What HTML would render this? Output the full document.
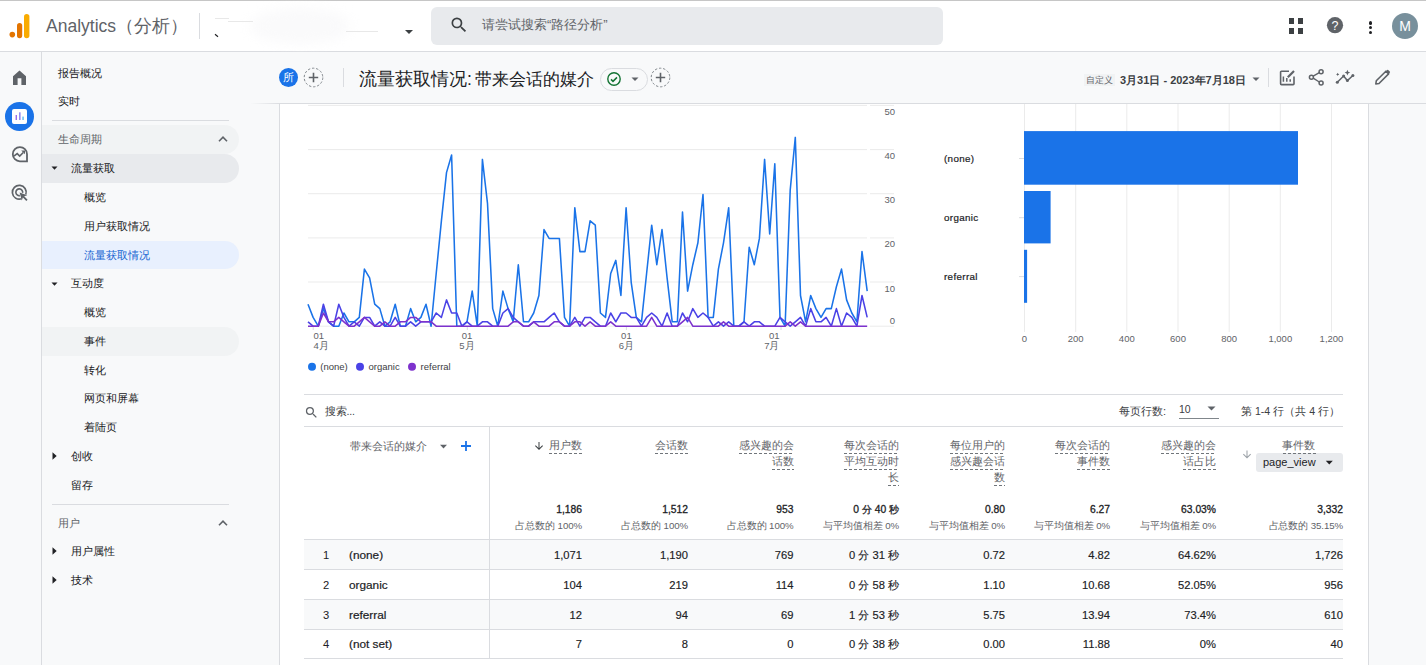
<!DOCTYPE html>
<html><head><meta charset="utf-8">
<style>
*{box-sizing:border-box}
html,body{margin:0;padding:0}
body{width:1426px;height:665px;overflow:hidden;position:relative;background:#fff;font-family:"Liberation Sans",sans-serif;color:#202124}
.a{position:absolute;white-space:nowrap}
.hdr{left:0;top:0;width:1426px;height:52px;background:#fff;border-top:1px solid #c6c6c6;border-bottom:1px solid #dadce0}
.rail{left:0;top:52px;width:42px;height:613px;background:#f8f9fa;border-right:1px solid #dadce0}
.nav{left:42px;top:52px;width:238px;height:613px;background:#f8f9fa}
.navb{left:279px;top:104px;width:1px;height:561px;background:#dadce0}
.sub{left:280px;top:52px;width:1146px;height:52px;background:#f8f9fa;border-bottom:1px solid #dadce0}
.card{left:280px;top:104px;width:1089px;height:561px;background:#fff;border-right:1px solid #dadce0}
.rstrip{left:1369px;top:104px;width:57px;height:561px;background:#f8f9fa}
.ni{font-size:11.2px;color:#202124;line-height:14px}
</style></head><body>
<!-- header -->
<div class="a hdr"></div>
<svg class="a" style="left:0;top:0" width="40" height="50">
  <circle cx="12.3" cy="34.6" r="2.8" fill="#e37400"/>
  <rect x="17" y="23" width="5.2" height="15.2" rx="2.6" fill="#e37400"/>
  <rect x="24" y="14" width="5.4" height="24.2" rx="2.7" fill="#f9ab00"/>
</svg>
<div class="a" style="left:46px;top:15px;font-size:17.5px;color:#5f6368;line-height:22px">Analytics（分析）</div>
<div class="a" style="left:199px;top:13px;width:1px;height:26px;background:#dadce0"></div>
<div class="a" style="left:250px;top:8px;width:100px;height:36px;border-radius:50%;background:#fafafb;filter:blur(6px)"></div>
<div class="a" style="left:215px;top:18px;width:14px;height:1px;background:#e8e8e8"></div>
<div class="a" style="left:228px;top:21px;width:25px;height:1px;background:#e8e8e8"></div>
<div class="a" style="left:346px;top:31px;width:32px;height:1px;background:#e8e8e8"></div>
<svg class="a" style="left:214px;top:33px" width="8" height="6"><path d="M1 1.2l3 2.5" stroke="#202124" stroke-width="1.2"/></svg>
<svg class="a" style="left:403px;top:28px" width="12" height="8"><path d="M2 2h8l-4 4z" fill="#3c4043"/></svg>
<div class="a" style="left:431px;top:7px;width:512px;height:37.5px;background:#e8eaed;border-radius:6px"></div>
<svg class="a" style="left:449px;top:15px" width="20" height="20" viewBox="0 0 24 24"><path fill="#3c4043" d="M15.5 14h-.79l-.28-.27A6.47 6.47 0 0 0 16 9.5 6.5 6.5 0 1 0 9.5 16c1.61 0 3.09-.59 4.23-1.57l.27.28v.79l5 4.99L20.49 19l-4.99-5zm-6 0C7.01 14 5 11.99 5 9.5S7.01 5 9.5 5 14 7.01 14 9.5 11.99 14 9.5 14z"/></svg>
<div class="a" style="left:482px;top:17px;font-size:13px;color:#5f6368;line-height:16px">请尝试搜索“路径分析”</div>
<!-- apps grid -->
<div class="a" style="left:1289px;top:18px;width:5px;height:5.5px;background:#3c4043"></div>
<div class="a" style="left:1298px;top:18px;width:5px;height:5.5px;background:#3c4043"></div>
<div class="a" style="left:1289px;top:28px;width:5px;height:5.5px;background:#3c4043"></div>
<div class="a" style="left:1298px;top:28px;width:5px;height:5.5px;background:#3c4043"></div>
<svg class="a" style="left:1325px;top:15px" width="20" height="20" viewBox="0 0 20 20"><circle cx="10" cy="10.2" r="8.1" fill="#5f6368"/><text x="10" y="14.6" font-size="12.5" text-anchor="middle" fill="#fff" font-family="Liberation Sans">?</text></svg>
<div class="a" style="left:1368.5px;top:21px;width:3.5px;height:3.5px;border-radius:50%;background:#202124"></div>
<div class="a" style="left:1368.5px;top:25.5px;width:3.5px;height:3.5px;border-radius:50%;background:#202124"></div>
<div class="a" style="left:1368.5px;top:30.5px;width:3.5px;height:3.5px;border-radius:50%;background:#202124"></div>
<div class="a" style="left:1392px;top:13px;width:26px;height:26px;border-radius:50%;background:#78909c;color:#fff;font-size:14px;line-height:27px;text-align:center">M</div>

<!-- rail -->
<div class="a rail"></div>
<svg class="a" style="left:0;top:60px" width="40" height="30" viewBox="0 60 40 30"><path d="M19.5 70.4L13 76.2V85H17.6V78.3H21.4V85H26V76.2Z" fill="#5f6368"/></svg>
<div class="a" style="left:5px;top:101.5px;width:29px;height:29px;border-radius:50%;background:#1a73e8"></div>
<div class="a" style="left:12.2px;top:109px;width:15px;height:15px;border-radius:2px;background:#fff"></div>
<svg class="a" style="left:0;top:100px" width="40" height="30" viewBox="0 100 40 30"><rect x="15.6" y="115" width="1.3" height="5" fill="#8f5fe8"/><rect x="19.2" y="112.3" width="1.3" height="7.7" fill="#7b6ff0"/><rect x="22.4" y="116.6" width="1.3" height="3.4" fill="#4fb3f0"/></svg>
<svg class="a" style="left:10px;top:145px" width="20" height="20" viewBox="0 0 20 20"><path d="M9.9 16.3A7.1 7.1 0 1 1 17 9.2V16.3Z" fill="none" stroke="#5f6368" stroke-width="1.8" stroke-linejoin="miter"/><path d="M3.9 11.1l3.3-2.5 2.5 2.5 3.6-3.6" fill="none" stroke="#5f6368" stroke-width="1.6"/><path d="M11.2 5.4h3.8v3.8z" fill="#5f6368"/></svg>
<svg class="a" style="left:10px;top:183px" width="20" height="20" viewBox="0 0 20 20"><path d="M15.8 11.5A6.9 6.9 0 1 0 11.5 15.8" fill="none" stroke="#5f6368" stroke-width="1.7"/><path d="M12.6 9.9A3.4 3.4 0 1 0 9.9 12.6" fill="none" stroke="#5f6368" stroke-width="1.6"/><path d="M9.6 9.6l7.6 2.6-3 1.1 3.4 3.4-1.3 1.3-3.4-3.4-1.1 3z" fill="#5f6368"/></svg>

<!-- nav -->
<div class="a nav"></div>
<div class="a" style="left:42px;top:125px;width:197px;height:29px;background:#f1f3f4;border-radius:0 14.5px 14.5px 0"></div>
<div class="a" style="left:42px;top:154px;width:197px;height:29px;background:#e8eaed;border-radius:0 14.5px 14.5px 0"></div>
<div class="a" style="left:42px;top:240.5px;width:197px;height:28.5px;background:#e8f0fe;border-radius:0 14.25px 14.25px 0"></div>
<div class="a" style="left:42px;top:327px;width:197px;height:29px;background:#f1f3f4;border-radius:0 14.5px 14.5px 0"></div>
<div class="a" style="left:58px;top:64.8px;font-size:11.2px;line-height:16px;color:#202124;">报告概况</div>
<div class="a" style="left:58px;top:93.0px;font-size:11.2px;line-height:16px;color:#202124;">实时</div>
<div class="a" style="left:52px;top:120px;width:177px;height:1px;background:#dadce0"></div>
<div class="a" style="left:58px;top:130.8px;font-size:11.2px;line-height:16px;color:#5f6368;">生命周期</div>
<svg class="a" style="left:218px;top:135px" width="10" height="8"><path d="M1 6.2L5 2.2 9 6.2" fill="none" stroke="#5f6368" stroke-width="1.6"/></svg>
<svg class="a" style="left:51px;top:165.3px" width="7" height="6"><path d="M0.5 1.5h6l-3 3.2z" fill="#202124"/></svg>
<div class="a" style="left:71px;top:160.2px;font-size:11.2px;line-height:16px;color:#202124;">流量获取</div>
<div class="a" style="left:84px;top:189.1px;font-size:11.2px;line-height:16px;color:#202124;">概览</div>
<div class="a" style="left:84px;top:217.9px;font-size:11.2px;line-height:16px;color:#202124;">用户获取情况</div>
<div class="a" style="left:84px;top:246.8px;font-size:11.2px;line-height:16px;color:#1967d2;">流量获取情况</div>
<svg class="a" style="left:51px;top:280.5px" width="7" height="6"><path d="M0.5 1.5h6l-3 3.2z" fill="#202124"/></svg>
<div class="a" style="left:71px;top:275.4px;font-size:11.2px;line-height:16px;color:#202124;">互动度</div>
<div class="a" style="left:84px;top:303.8px;font-size:11.2px;line-height:16px;color:#202124;">概览</div>
<div class="a" style="left:84px;top:333.1px;font-size:11.2px;line-height:16px;color:#202124;">事件</div>
<div class="a" style="left:84px;top:362.1px;font-size:11.2px;line-height:16px;color:#202124;">转化</div>
<div class="a" style="left:84px;top:390.2px;font-size:11.2px;line-height:16px;color:#202124;">网页和屏幕</div>
<div class="a" style="left:84px;top:419.1px;font-size:11.2px;line-height:16px;color:#202124;">着陆页</div>
<svg class="a" style="left:52px;top:452px" width="6" height="8"><path d="M0.5 0.3v7.4l4.2-3.7z" fill="#202124"/></svg>
<div class="a" style="left:71px;top:447.8px;font-size:11.2px;line-height:16px;color:#202124;">创收</div>
<div class="a" style="left:71px;top:476.8px;font-size:11.2px;line-height:16px;color:#202124;">留存</div>
<div class="a" style="left:52px;top:504px;width:177px;height:1px;background:#dadce0"></div>
<div class="a" style="left:58px;top:514.8px;font-size:11.2px;line-height:16px;color:#5f6368;">用户</div>
<svg class="a" style="left:218px;top:519px" width="10" height="8"><path d="M1 6.2L5 2.2 9 6.2" fill="none" stroke="#5f6368" stroke-width="1.6"/></svg>
<svg class="a" style="left:52px;top:547px" width="6" height="8"><path d="M0.5 0.3v7.4l4.2-3.7z" fill="#202124"/></svg>
<div class="a" style="left:71px;top:542.8px;font-size:11.2px;line-height:16px;color:#202124;">用户属性</div>
<svg class="a" style="left:52px;top:576px" width="6" height="8"><path d="M0.5 0.3v7.4l4.2-3.7z" fill="#202124"/></svg>
<div class="a" style="left:71px;top:571.8px;font-size:11.2px;line-height:16px;color:#202124;">技术</div>

<!-- subheader -->
<div class="a sub"></div>
<div class="a" style="left:279px;top:68px;width:19px;height:19px;border-radius:50%;background:#1a73e8;color:#fff;font-size:11px;line-height:19px;text-align:center">所</div>
<svg class="a" style="left:302.9px;top:66.8px" width="21" height="21"><circle cx="10.5" cy="10.5" r="9.3" fill="none" stroke="#80868b" stroke-width="1" stroke-dasharray="2.4 1.8"/><path d="M10.5 5.8v9.4M5.8 10.5h9.4" stroke="#5f6368" stroke-width="1.6"/></svg>
<div class="a" style="left:343px;top:68px;width:1px;height:19px;background:#dadce0"></div>
<div class="a" style="left:359px;top:66.5px;font-size:17.5px;line-height:24px;color:#202124">流量获取情况:</div>
<div class="a" style="left:475px;top:66.5px;font-size:17.3px;line-height:24px;color:#202124">带来会话的媒介</div>
<div class="a" style="left:600px;top:67.8px;width:48px;height:23px;border:1px solid #dadce0;border-radius:11.5px"></div>
<svg class="a" style="left:606px;top:70.5px" width="16" height="16" viewBox="0 0 16 16"><circle cx="8" cy="8" r="6.2" fill="none" stroke="#137333" stroke-width="1.4"/><path d="M5 8.4l2 2 4-4" fill="none" stroke="#137333" stroke-width="1.5"/></svg>
<svg class="a" style="left:630.5px;top:77px" width="8" height="5"><path d="M0.5 0.5h7l-3.5 3.6z" fill="#5f6368"/></svg>
<svg class="a" style="left:650.0px;top:66.5px" width="21" height="21"><circle cx="10.5" cy="10.5" r="9.3" fill="none" stroke="#80868b" stroke-width="1" stroke-dasharray="2.4 1.8"/><path d="M10.5 5.8v9.4M5.8 10.5h9.4" stroke="#5f6368" stroke-width="1.6"/></svg>
<div class="a" style="left:1084px;top:74px;width:31px;height:12px;background:#f1f3f4;font-size:8.5px;line-height:12px;color:#5f6368;text-align:center">自定义</div>
<div class="a" style="left:1120px;top:72px;font-size:11px;line-height:16px;color:#3c4043;font-weight:bold">3月31日 - 2023年7月18日</div>
<svg class="a" style="left:1252px;top:77px" width="8" height="5"><path d="M0.5 0.5h7l-3.5 3.6z" fill="#5f6368"/></svg>
<div class="a" style="left:1268px;top:68px;width:1px;height:19px;background:#dadce0"></div>
<svg class="a" style="left:1270px;top:60px" width="130" height="35" viewBox="1270 60 130 35"><path d="M1289 71.2H1281.5a0.9 0.9 0 0 0-.9.9v11.6a.9.9 0 0 0 .9.9h11.6a.9.9 0 0 0 .9-.9V76.5" fill="none" stroke="#5f6368" stroke-width="1.6"/><path d="M1283.4 76.4v5.4M1286.8 78v3.8M1290.2 79.3v2.5" stroke="#5f6368" stroke-width="1.5"/><path d="M1287.8 77.2l6.2-6.2" stroke="#5f6368" stroke-width="2.2"/><circle cx="1321.1" cy="71.7" r="2" fill="none" stroke="#5f6368" stroke-width="1.5"/><circle cx="1311.4" cy="77.2" r="2" fill="none" stroke="#5f6368" stroke-width="1.5"/><circle cx="1321.1" cy="83.1" r="2" fill="none" stroke="#5f6368" stroke-width="1.5"/><path d="M1313.2 76.2l6.1-3.5M1313.2 78.2l6.1 3.8" stroke="#5f6368" stroke-width="1.4"/><path d="M1337.3 82.3l6.3-6.3 3.8 4.6 5.5-5.1" fill="none" stroke="#5f6368" stroke-width="1.5"/><circle cx="1337.3" cy="82.3" r="1.5" fill="#5f6368"/><circle cx="1343.6" cy="76" r="1.5" fill="#5f6368"/><circle cx="1347.4" cy="80.6" r="1.5" fill="#5f6368"/><circle cx="1352.9" cy="75.5" r="1.5" fill="#5f6368"/><path d="M1347.4 69.8l.8 2 2 .8-2 .8-.8 2-.8-2-2-.8 2-.8z" fill="#5f6368"/><path d="M1337.7 72.8l.55 1.05 1.05 .55-1.05 .55-.55 1.05-.55-1.05-1.05-.55 1.05-.55z" fill="#5f6368"/><path d="M1375.8 84l.5-3.2 9.6-9.6 2.7 2.7-9.6 9.6z" fill="none" stroke="#5f6368" stroke-width="1.6" stroke-linejoin="round"/><path d="M1385.9 71.2l1.2-1.2a.8 .8 0 0 1 1.1 0l1.6 1.6a.8 .8 0 0 1 0 1.1l-1.2 1.2z" fill="#5f6368"/></svg>

<!-- content -->
<div class="a navb"></div>
<div class="a" style="left:250px;top:103px;width:30px;height:1px;background:linear-gradient(90deg,rgba(218,220,224,0),#dadce0)"></div>
<div class="a card"></div>
<div class="a rstrip"></div>
<svg class="a" style="left:0;top:0" width="1426" height="665"><line x1="308" y1="105.4" x2="867" y2="105.4" stroke="#ebebeb" stroke-width="1"/><line x1="870" y1="105.4" x2="894" y2="105.4" stroke="#ebebeb" stroke-width="1"/><text x="895" y="114.9" font-size="9.5" fill="#5f6368" text-anchor="end" font-family="Liberation Sans">50</text><line x1="308" y1="149.6" x2="867" y2="149.6" stroke="#ebebeb" stroke-width="1"/><line x1="870" y1="149.6" x2="894" y2="149.6" stroke="#ebebeb" stroke-width="1"/><text x="895" y="159.1" font-size="9.5" fill="#5f6368" text-anchor="end" font-family="Liberation Sans">40</text><line x1="308" y1="193.7" x2="867" y2="193.7" stroke="#ebebeb" stroke-width="1"/><line x1="870" y1="193.7" x2="894" y2="193.7" stroke="#ebebeb" stroke-width="1"/><text x="895" y="203.2" font-size="9.5" fill="#5f6368" text-anchor="end" font-family="Liberation Sans">30</text><line x1="308" y1="237.9" x2="867" y2="237.9" stroke="#ebebeb" stroke-width="1"/><line x1="870" y1="237.9" x2="894" y2="237.9" stroke="#ebebeb" stroke-width="1"/><text x="895" y="247.4" font-size="9.5" fill="#5f6368" text-anchor="end" font-family="Liberation Sans">20</text><line x1="308" y1="282.0" x2="867" y2="282.0" stroke="#ebebeb" stroke-width="1"/><line x1="870" y1="282.0" x2="894" y2="282.0" stroke="#ebebeb" stroke-width="1"/><text x="895" y="291.5" font-size="9.5" fill="#5f6368" text-anchor="end" font-family="Liberation Sans">10</text><line x1="308" y1="326.2" x2="867" y2="326.2" stroke="#ebebeb" stroke-width="1"/><line x1="870" y1="326.2" x2="894" y2="326.2" stroke="#ebebeb" stroke-width="1"/><text x="895" y="323.7" font-size="9.5" fill="#5f6368" text-anchor="end" font-family="Liberation Sans">0</text><line x1="313.2" y1="326.5" x2="313.2" y2="330" stroke="#dadce0" stroke-width="1"/><line x1="467.3" y1="326.5" x2="467.3" y2="330" stroke="#dadce0" stroke-width="1"/><line x1="626.4" y1="326.5" x2="626.4" y2="330" stroke="#dadce0" stroke-width="1"/><line x1="781" y1="326.5" x2="781" y2="330" stroke="#dadce0" stroke-width="1"/><text x="313.5" y="338.5" font-size="9.5" fill="#5f6368" text-anchor="start" font-family="Liberation Sans">01</text><text x="313.5" y="349" font-size="9.5" fill="#5f6368" text-anchor="start" font-family="Liberation Sans">4月</text><text x="467" y="338.5" font-size="9.5" fill="#5f6368" text-anchor="middle" font-family="Liberation Sans">01</text><text x="467" y="349" font-size="9.5" fill="#5f6368" text-anchor="middle" font-family="Liberation Sans">5月</text><text x="626.4" y="338.5" font-size="9.5" fill="#5f6368" text-anchor="middle" font-family="Liberation Sans">01</text><text x="626.4" y="349" font-size="9.5" fill="#5f6368" text-anchor="middle" font-family="Liberation Sans">6月</text><text x="779.5" y="338.5" font-size="9.5" fill="#5f6368" text-anchor="end" font-family="Liberation Sans">01</text><text x="779.5" y="349" font-size="9.5" fill="#5f6368" text-anchor="end" font-family="Liberation Sans">7月</text><path d="M308.0,304.2 L313.1,317.4 L318.3,326.2 L323.4,308.6 L328.5,321.8 L333.6,326.2 L338.8,326.2 L343.9,313.0 L349.0,321.8 L354.2,321.8 L359.3,317.4 L364.4,269.1 L369.6,277.9 L374.7,304.2 L379.8,308.6 L384.9,326.2 L390.1,321.8 L395.2,304.2 L400.3,326.2 L405.5,326.2 L410.6,308.6 L415.7,321.8 L420.9,317.4 L426.0,304.2 L431.1,326.2 L436.2,273.5 L441.4,220.8 L446.5,172.6 L451.6,155.0 L456.8,326.2 L461.9,326.2 L467.0,321.8 L472.2,291.1 L477.3,326.2 L482.4,159.4 L487.5,203.3 L492.7,308.6 L497.8,326.2 L502.9,291.1 L508.1,308.6 L513.2,321.8 L518.3,264.7 L523.5,321.8 L528.6,321.8 L533.7,313.0 L538.9,295.5 L544.0,229.6 L549.1,238.4 L554.2,238.4 L559.4,238.4 L564.5,317.4 L569.6,326.2 L574.8,207.7 L579.9,251.6 L585.0,251.6 L590.1,220.8 L595.3,225.2 L600.4,313.0 L605.5,317.4 L610.7,273.5 L615.8,260.4 L620.9,295.5 L626.1,207.7 L631.2,282.3 L636.3,317.4 L641.5,321.8 L646.6,273.5 L651.7,225.2 L656.8,264.7 L662.0,229.6 L667.1,277.9 L672.2,321.8 L677.4,321.8 L682.5,212.1 L687.6,291.1 L692.8,264.7 L697.9,242.8 L703.0,194.5 L708.1,317.4 L713.3,317.4 L718.4,269.1 L723.5,242.8 L728.7,207.7 L733.8,326.2 L738.9,326.2 L744.0,321.8 L749.2,247.2 L754.3,264.7 L759.4,238.4 L764.6,159.4 L769.7,234.0 L774.8,163.8 L780.0,317.4 L785.1,326.2 L790.2,190.1 L795.3,137.4 L800.5,295.5 L805.6,321.8 L810.7,295.5 L815.9,308.6 L821.0,317.4 L826.1,308.6 L831.3,308.6 L836.4,286.7 L841.5,269.1 L846.6,299.9 L851.8,313.0 L856.9,321.8 L862.0,251.6 L867.2,291.1" fill="none" stroke="#1a73e8" stroke-width="1.55" stroke-linejoin="round"/><path d="M308.0,321.8 L313.1,326.2 L318.3,326.2 L323.4,304.2 L328.5,321.8 L333.6,326.2 L338.8,304.2 L343.9,317.4 L349.0,326.2 L354.2,321.8 L359.3,326.2 L364.4,317.4 L369.6,317.4 L374.7,326.2 L379.8,321.8 L384.9,326.2 L390.1,326.2 L395.2,317.4 L400.3,326.2 L405.5,326.2 L410.6,321.8 L415.7,326.2 L420.9,321.8 L426.0,321.8 L431.1,321.8 L436.2,313.0 L441.4,317.4 L446.5,299.9 L451.6,313.0 L456.8,313.0 L461.9,326.2 L467.0,321.8 L472.2,326.2 L477.3,326.2 L482.4,321.8 L487.5,321.8 L492.7,326.2 L497.8,326.2 L502.9,313.0 L508.1,308.6 L513.2,317.4 L518.3,321.8 L523.5,326.2 L528.6,326.2 L533.7,321.8 L538.9,321.8 L544.0,321.8 L549.1,317.4 L554.2,313.0 L559.4,321.8 L564.5,326.2 L569.6,326.2 L574.8,317.4 L579.9,326.2 L585.0,317.4 L590.1,317.4 L595.3,321.8 L600.4,326.2 L605.5,326.2 L610.7,313.0 L615.8,321.8 L620.9,313.0 L626.1,313.0 L631.2,317.4 L636.3,317.4 L641.5,326.2 L646.6,317.4 L651.7,313.0 L656.8,317.4 L662.0,326.2 L667.1,313.0 L672.2,326.2 L677.4,326.2 L682.5,313.0 L687.6,321.8 L692.8,308.6 L697.9,317.4 L703.0,313.0 L708.1,317.4 L713.3,326.2 L718.4,321.8 L723.5,326.2 L728.7,321.8 L733.8,326.2 L738.9,326.2 L744.0,321.8 L749.2,326.2 L754.3,321.8 L759.4,321.8 L764.6,326.2 L769.7,326.2 L774.8,326.2 L780.0,317.4 L785.1,321.8 L790.2,326.2 L795.3,321.8 L800.5,317.4 L805.6,326.2 L810.7,308.6 L815.9,321.8 L821.0,321.8 L826.1,317.4 L831.3,326.2 L836.4,308.6 L841.5,326.2 L846.6,313.0 L851.8,317.4 L856.9,326.2 L862.0,295.5 L867.2,317.4" fill="none" stroke="#4a42e6" stroke-width="1.55" stroke-linejoin="round"/><path d="M308.0,326.2 L313.1,326.2 L318.3,326.2 L323.4,313.0 L328.5,321.8 L333.6,321.8 L338.8,317.4 L343.9,321.8 L349.0,326.2 L354.2,326.2 L359.3,321.8 L364.4,317.4 L369.6,321.8 L374.7,326.2 L379.8,326.2 L384.9,321.8 L390.1,326.2 L395.2,326.2 L400.3,321.8 L405.5,321.8 L410.6,317.4 L415.7,317.4 L420.9,321.8 L426.0,321.8 L431.1,321.8 L436.2,326.2 L441.4,326.2 L446.5,326.2 L451.6,326.2 L456.8,326.2 L461.9,326.2 L467.0,326.2 L472.2,326.2 L477.3,326.2 L482.4,326.2 L487.5,326.2 L492.7,326.2 L497.8,326.2 L502.9,326.2 L508.1,326.2 L513.2,321.8 L518.3,321.8 L523.5,326.2 L528.6,326.2 L533.7,321.8 L538.9,326.2 L544.0,326.2 L549.1,326.2 L554.2,321.8 L559.4,321.8 L564.5,326.2 L569.6,326.2 L574.8,321.8 L579.9,321.8 L585.0,326.2 L590.1,321.8 L595.3,326.2 L600.4,326.2 L605.5,326.2 L610.7,321.8 L615.8,326.2 L620.9,326.2 L626.1,326.2 L631.2,326.2 L636.3,326.2 L641.5,326.2 L646.6,326.2 L651.7,317.4 L656.8,326.2 L662.0,326.2 L667.1,326.2 L672.2,326.2 L677.4,326.2 L682.5,321.8 L687.6,317.4 L692.8,326.2 L697.9,326.2 L703.0,326.2 L708.1,326.2 L713.3,326.2 L718.4,326.2 L723.5,321.8 L728.7,326.2 L733.8,326.2 L738.9,326.2 L744.0,326.2 L749.2,326.2 L754.3,326.2 L759.4,326.2 L764.6,326.2 L769.7,326.2 L774.8,326.2 L780.0,326.2 L785.1,326.2 L790.2,321.8 L795.3,326.2 L800.5,321.8 L805.6,326.2 L810.7,326.2 L815.9,326.2 L821.0,326.2 L826.1,326.2 L831.3,326.2 L836.4,326.2 L841.5,326.2 L846.6,326.2 L851.8,326.2 L856.9,326.2 L862.0,326.2 L867.2,326.2" fill="none" stroke="#7d32cd" stroke-width="1.55" stroke-linejoin="round"/><circle cx="312" cy="366.8" r="4" fill="#1a73e8"/><text x="320.3" y="370.2" font-size="9.5" fill="#3c4043" font-family="Liberation Sans">(none)</text><circle cx="360" cy="366.8" r="4" fill="#4a42e6"/><text x="368.5" y="370.2" font-size="9.5" fill="#3c4043" font-family="Liberation Sans">organic</text><circle cx="412" cy="366.8" r="4" fill="#7d32cd"/><text x="420.6" y="370.2" font-size="9.5" fill="#3c4043" font-family="Liberation Sans">referral</text><line x1="1024.5" y1="104" x2="1024.5" y2="332" stroke="#ebebeb" stroke-width="1"/><text x="1024.5" y="341.8" font-size="9.5" fill="#5f6368" text-anchor="middle" font-family="Liberation Sans">0</text><line x1="1075.7" y1="104" x2="1075.7" y2="332" stroke="#ebebeb" stroke-width="1"/><text x="1075.7" y="341.8" font-size="9.5" fill="#5f6368" text-anchor="middle" font-family="Liberation Sans">200</text><line x1="1126.8" y1="104" x2="1126.8" y2="332" stroke="#ebebeb" stroke-width="1"/><text x="1126.8" y="341.8" font-size="9.5" fill="#5f6368" text-anchor="middle" font-family="Liberation Sans">400</text><line x1="1178.0" y1="104" x2="1178.0" y2="332" stroke="#ebebeb" stroke-width="1"/><text x="1178.0" y="341.8" font-size="9.5" fill="#5f6368" text-anchor="middle" font-family="Liberation Sans">600</text><line x1="1229.2" y1="104" x2="1229.2" y2="332" stroke="#ebebeb" stroke-width="1"/><text x="1229.2" y="341.8" font-size="9.5" fill="#5f6368" text-anchor="middle" font-family="Liberation Sans">800</text><line x1="1280.3" y1="104" x2="1280.3" y2="332" stroke="#ebebeb" stroke-width="1"/><text x="1280.3" y="341.8" font-size="9.5" fill="#5f6368" text-anchor="middle" font-family="Liberation Sans">1,000</text><line x1="1331.5" y1="104" x2="1331.5" y2="332" stroke="#ebebeb" stroke-width="1"/><text x="1331.5" y="341.8" font-size="9.5" fill="#5f6368" text-anchor="middle" font-family="Liberation Sans">1,200</text><rect x="1024" y="131.1" width="274.0" height="53.6" fill="#1a73e8"/><line x1="1019" y1="158.5" x2="1024" y2="158.5" stroke="#dadce0"/><text x="944" y="161.9" font-size="9.8" letter-spacing="0.35" fill="#202124" stroke="#202124" stroke-width="0.2" font-family="Liberation Sans">(none)</text><rect x="1024" y="191" width="26.6" height="52.4" fill="#1a73e8"/><line x1="1019" y1="217.7" x2="1024" y2="217.7" stroke="#dadce0"/><text x="944" y="221.1" font-size="9.8" letter-spacing="0.35" fill="#202124" stroke="#202124" stroke-width="0.2" font-family="Liberation Sans">organic</text><rect x="1024" y="249.8" width="3.1" height="53.0" fill="#1a73e8"/><line x1="1019" y1="276.6" x2="1024" y2="276.6" stroke="#dadce0"/><text x="944" y="280.0" font-size="9.8" letter-spacing="0.35" fill="#202124" stroke="#202124" stroke-width="0.2" font-family="Liberation Sans">referral</text><line x1="304" y1="394.5" x2="1343" y2="394.5" stroke="#dadce0"/></svg>
<svg class="a" style="left:304px;top:405px" width="15" height="15" viewBox="0 0 24 24"><path fill="#5f6368" d="M15.5 14h-.79l-.28-.27A6.47 6.47 0 0 0 16 9.5 6.5 6.5 0 1 0 9.5 16c1.61 0 3.09-.59 4.23-1.57l.27.28v.79l5 4.99L20.49 19l-4.99-5zm-6 0C7.01 14 5 11.99 5 9.5S7.01 5 9.5 5 14 7.01 14 9.5 11.99 14 9.5 14z"/></svg>
<div class="a" style="left:325px;top:403.2px;font-size:10.6px;line-height:16px;color:#3c4043;letter-spacing:-0.2px">搜索...</div>
<div class="a" style="left:1119px;top:402.6px;font-size:11px;line-height:16px;color:#3c4043;">每页行数:</div>
<div class="a" style="left:1179px;top:400.6px;font-size:10.5px;line-height:16px;color:#3c4043;">10</div>
<div class="a" style="left:1179px;top:418px;width:40px;height:1px;background:#80868b"></div>
<svg class="a" style="left:1207px;top:406px" width="10" height="6"><path d="M0.5 0.5h8l-4 4z" fill="#5f6368"/></svg>
<div class="a" style="left:1241px;top:402.6px;font-size:10.6px;line-height:16px;color:#3c4043;">第 1-4 行（共 4 行）</div>
<div class="a" style="left:304px;top:426px;width:1039px;height:1px;background:#dadce0"></div>
<div class="a" style="left:304px;top:539.5px;width:1039px;height:30px;background:#f8f9fa"></div>
<div class="a" style="left:304px;top:599.3px;width:1039px;height:30px;background:#f8f9fa"></div>
<div class="a" style="left:304px;top:539px;width:1039px;height:1px;background:#dadce0"></div>
<div class="a" style="left:304px;top:569px;width:1039px;height:1px;background:#dadce0"></div>
<div class="a" style="left:304px;top:599px;width:1039px;height:1px;background:#dadce0"></div>
<div class="a" style="left:304px;top:628.5px;width:1039px;height:1px;background:#dadce0"></div>
<div class="a" style="left:304px;top:658.3px;width:1039px;height:1px;background:#dadce0"></div>
<div class="a" style="left:489px;top:427px;width:1px;height:232px;background:#dadce0"></div>
<div class="a" style="left:350px;top:438.2px;font-size:11.4px;line-height:16px;color:#5f6368;">带来会话的媒介</div>
<svg class="a" style="left:439px;top:443.5px" width="9" height="6"><path d="M1 0.8h7l-3.5 3.6z" fill="#5f6368"/></svg>
<svg class="a" style="left:460px;top:440px" width="12" height="12"><path d="M6 1v10M1 6h10" stroke="#1a73e8" stroke-width="1.8"/></svg>
<div class="a" style="left:382px;width:200px;text-align:right;top:437.3px;font-size:11.4px;line-height:16px;color:#5f6368"><span style="display:inline-block;line-height:14px;padding-bottom:2px;background:linear-gradient(90deg,#70757a 3px,transparent 3px) 0 100%/5px 1px repeat-x">用户数</span></div>
<div class="a" style="left:488px;width:200px;text-align:right;top:437.3px;font-size:11.4px;line-height:16px;color:#5f6368"><span style="display:inline-block;line-height:14px;padding-bottom:2px;background:linear-gradient(90deg,#70757a 3px,transparent 3px) 0 100%/5px 1px repeat-x">会话数</span></div>
<div class="a" style="left:593.5px;width:200px;text-align:right;top:437.3px;font-size:11.4px;line-height:16px;color:#5f6368"><span style="display:inline-block;line-height:14px;padding-bottom:2px;background:linear-gradient(90deg,#70757a 3px,transparent 3px) 0 100%/5px 1px repeat-x">感兴趣的会</span></div><div class="a" style="left:593.5px;width:200px;text-align:right;top:453.2px;font-size:11.4px;line-height:16px;color:#5f6368"><span style="display:inline-block;line-height:14px;padding-bottom:2px;background:linear-gradient(90deg,#70757a 3px,transparent 3px) 0 100%/5px 1px repeat-x">话数</span></div>
<div class="a" style="left:699px;width:200px;text-align:right;top:437.3px;font-size:11.4px;line-height:16px;color:#5f6368"><span style="display:inline-block;line-height:14px;padding-bottom:2px;background:linear-gradient(90deg,#70757a 3px,transparent 3px) 0 100%/5px 1px repeat-x">每次会话的</span></div><div class="a" style="left:699px;width:200px;text-align:right;top:453.2px;font-size:11.4px;line-height:16px;color:#5f6368"><span style="display:inline-block;line-height:14px;padding-bottom:2px;background:linear-gradient(90deg,#70757a 3px,transparent 3px) 0 100%/5px 1px repeat-x">平均互动时</span></div><div class="a" style="left:699px;width:200px;text-align:right;top:469.1px;font-size:11.4px;line-height:16px;color:#5f6368"><span style="display:inline-block;line-height:14px;padding-bottom:2px;background:linear-gradient(90deg,#70757a 3px,transparent 3px) 0 100%/5px 1px repeat-x">长</span></div>
<div class="a" style="left:805px;width:200px;text-align:right;top:437.3px;font-size:11.4px;line-height:16px;color:#5f6368"><span style="display:inline-block;line-height:14px;padding-bottom:2px;background:linear-gradient(90deg,#70757a 3px,transparent 3px) 0 100%/5px 1px repeat-x">每位用户的</span></div><div class="a" style="left:805px;width:200px;text-align:right;top:453.2px;font-size:11.4px;line-height:16px;color:#5f6368"><span style="display:inline-block;line-height:14px;padding-bottom:2px;background:linear-gradient(90deg,#70757a 3px,transparent 3px) 0 100%/5px 1px repeat-x">感兴趣会话</span></div><div class="a" style="left:805px;width:200px;text-align:right;top:469.1px;font-size:11.4px;line-height:16px;color:#5f6368"><span style="display:inline-block;line-height:14px;padding-bottom:2px;background:linear-gradient(90deg,#70757a 3px,transparent 3px) 0 100%/5px 1px repeat-x">数</span></div>
<div class="a" style="left:910px;width:200px;text-align:right;top:437.3px;font-size:11.4px;line-height:16px;color:#5f6368"><span style="display:inline-block;line-height:14px;padding-bottom:2px;background:linear-gradient(90deg,#70757a 3px,transparent 3px) 0 100%/5px 1px repeat-x">每次会话的</span></div><div class="a" style="left:910px;width:200px;text-align:right;top:453.2px;font-size:11.4px;line-height:16px;color:#5f6368"><span style="display:inline-block;line-height:14px;padding-bottom:2px;background:linear-gradient(90deg,#70757a 3px,transparent 3px) 0 100%/5px 1px repeat-x">事件数</span></div>
<div class="a" style="left:1016px;width:200px;text-align:right;top:437.3px;font-size:11.4px;line-height:16px;color:#5f6368"><span style="display:inline-block;line-height:14px;padding-bottom:2px;background:linear-gradient(90deg,#70757a 3px,transparent 3px) 0 100%/5px 1px repeat-x">感兴趣的会</span></div><div class="a" style="left:1016px;width:200px;text-align:right;top:453.2px;font-size:11.4px;line-height:16px;color:#5f6368"><span style="display:inline-block;line-height:14px;padding-bottom:2px;background:linear-gradient(90deg,#70757a 3px,transparent 3px) 0 100%/5px 1px repeat-x">话占比</span></div>
<svg class="a" style="left:533px;top:439.5px" width="12" height="12" viewBox="0 0 24 24"><path fill="#3c4043" d="M20 12l-1.41-1.41L13 16.17V4h-2v12.17l-5.58-5.59L4 12l8 8 8-8z"/></svg>
<div class="a" style="left:1282px;top:437.3px;font-size:11.2px;line-height:16px;color:#5f6368">事件数</div>
<svg class="a" style="left:1241px;top:448px" width="12" height="13" viewBox="0 0 24 24"><path fill="#9aa0a6" d="M20 12l-1.41-1.41L13 16.17V4h-2v12.17l-5.58-5.59L4 12l8 8 8-8z"/></svg>
<div class="a" style="left:1256px;top:453px;width:87px;height:19px;background:#e8eaed;border-radius:3px"></div>
<div class="a" style="left:1263px;top:454.1px;font-size:11px;line-height:16px;color:#202124;">page_view</div>
<div class="a" style="left:1282.5px;top:452.5px;width:34px;height:1px;background:linear-gradient(90deg,#70757a 3px,transparent 3px) 0 0/5px 1px repeat-x"></div>
<svg class="a" style="left:1325px;top:459.5px" width="9" height="6"><path d="M0.8 0.8h7l-3.5 3.6z" fill="#202124"/></svg>
<div class="a" style="left:282px;width:300px;text-align:right;top:501.6px;font-size:10.3px;line-height:16px;color:#202124;-webkit-text-stroke:0.3px #202124">1,186</div>
<div class="a" style="left:282px;width:300px;text-align:right;top:517.6px;font-size:9.7px;line-height:16px;color:#5f6368;letter-spacing:-0.1px">占总数的 100%</div>
<div class="a" style="left:388px;width:300px;text-align:right;top:501.6px;font-size:10.3px;line-height:16px;color:#202124;-webkit-text-stroke:0.3px #202124">1,512</div>
<div class="a" style="left:388px;width:300px;text-align:right;top:517.6px;font-size:9.7px;line-height:16px;color:#5f6368;letter-spacing:-0.1px">占总数的 100%</div>
<div class="a" style="left:493.5px;width:300px;text-align:right;top:501.6px;font-size:10.3px;line-height:16px;color:#202124;-webkit-text-stroke:0.3px #202124">953</div>
<div class="a" style="left:493.5px;width:300px;text-align:right;top:517.6px;font-size:9.7px;line-height:16px;color:#5f6368;letter-spacing:-0.1px">占总数的 100%</div>
<div class="a" style="left:599px;width:300px;text-align:right;top:501.6px;font-size:10.3px;line-height:16px;color:#202124;-webkit-text-stroke:0.3px #202124">0 分 40 秒</div>
<div class="a" style="left:599px;width:300px;text-align:right;top:517.6px;font-size:9.7px;line-height:16px;color:#5f6368;letter-spacing:-0.1px">与平均值相差 0%</div>
<div class="a" style="left:705px;width:300px;text-align:right;top:501.6px;font-size:10.3px;line-height:16px;color:#202124;-webkit-text-stroke:0.3px #202124">0.80</div>
<div class="a" style="left:705px;width:300px;text-align:right;top:517.6px;font-size:9.7px;line-height:16px;color:#5f6368;letter-spacing:-0.1px">与平均值相差 0%</div>
<div class="a" style="left:810px;width:300px;text-align:right;top:501.6px;font-size:10.3px;line-height:16px;color:#202124;-webkit-text-stroke:0.3px #202124">6.27</div>
<div class="a" style="left:810px;width:300px;text-align:right;top:517.6px;font-size:9.7px;line-height:16px;color:#5f6368;letter-spacing:-0.1px">与平均值相差 0%</div>
<div class="a" style="left:916px;width:300px;text-align:right;top:501.6px;font-size:10.3px;line-height:16px;color:#202124;-webkit-text-stroke:0.3px #202124">63.03%</div>
<div class="a" style="left:916px;width:300px;text-align:right;top:517.6px;font-size:9.7px;line-height:16px;color:#5f6368;letter-spacing:-0.1px">与平均值相差 0%</div>
<div class="a" style="left:1043px;width:300px;text-align:right;top:501.6px;font-size:10.3px;line-height:16px;color:#202124;-webkit-text-stroke:0.3px #202124">3,332</div>
<div class="a" style="left:1043px;width:300px;text-align:right;top:517.6px;font-size:9.7px;line-height:16px;color:#5f6368;letter-spacing:-0.1px">占总数的 35.15%</div>
<div class="a" style="left:316px;width:20px;text-align:center;top:547.1px;font-size:11.2px;line-height:16px;color:#202124">1</div>
<div class="a" style="left:349px;top:547.0px;font-size:11.8px;line-height:16px;color:#202124;-webkit-text-stroke:0.2px #202124">(none)</div>
<div class="a" style="left:282px;width:300px;text-align:right;top:547.2px;font-size:11.2px;line-height:16px;color:#202124;-webkit-text-stroke:0.15px #202124">1,071</div>
<div class="a" style="left:388px;width:300px;text-align:right;top:547.2px;font-size:11.2px;line-height:16px;color:#202124;-webkit-text-stroke:0.15px #202124">1,190</div>
<div class="a" style="left:493.5px;width:300px;text-align:right;top:547.2px;font-size:11.2px;line-height:16px;color:#202124;-webkit-text-stroke:0.15px #202124">769</div>
<div class="a" style="left:599px;width:300px;text-align:right;top:547.2px;font-size:11.2px;line-height:16px;color:#202124;-webkit-text-stroke:0.15px #202124">0 分 31 秒</div>
<div class="a" style="left:705px;width:300px;text-align:right;top:547.2px;font-size:11.2px;line-height:16px;color:#202124;-webkit-text-stroke:0.15px #202124">0.72</div>
<div class="a" style="left:810px;width:300px;text-align:right;top:547.2px;font-size:11.2px;line-height:16px;color:#202124;-webkit-text-stroke:0.15px #202124">4.82</div>
<div class="a" style="left:916px;width:300px;text-align:right;top:547.2px;font-size:11.2px;line-height:16px;color:#202124;-webkit-text-stroke:0.15px #202124">64.62%</div>
<div class="a" style="left:1043px;width:300px;text-align:right;top:547.2px;font-size:11.2px;line-height:16px;color:#202124;-webkit-text-stroke:0.15px #202124">1,726</div>
<div class="a" style="left:316px;width:20px;text-align:center;top:576.9px;font-size:11.2px;line-height:16px;color:#202124">2</div>
<div class="a" style="left:349px;top:576.8px;font-size:11.8px;line-height:16px;color:#202124;-webkit-text-stroke:0.2px #202124">organic</div>
<div class="a" style="left:282px;width:300px;text-align:right;top:577.0px;font-size:11.2px;line-height:16px;color:#202124;-webkit-text-stroke:0.15px #202124">104</div>
<div class="a" style="left:388px;width:300px;text-align:right;top:577.0px;font-size:11.2px;line-height:16px;color:#202124;-webkit-text-stroke:0.15px #202124">219</div>
<div class="a" style="left:493.5px;width:300px;text-align:right;top:577.0px;font-size:11.2px;line-height:16px;color:#202124;-webkit-text-stroke:0.15px #202124">114</div>
<div class="a" style="left:599px;width:300px;text-align:right;top:577.0px;font-size:11.2px;line-height:16px;color:#202124;-webkit-text-stroke:0.15px #202124">0 分 58 秒</div>
<div class="a" style="left:705px;width:300px;text-align:right;top:577.0px;font-size:11.2px;line-height:16px;color:#202124;-webkit-text-stroke:0.15px #202124">1.10</div>
<div class="a" style="left:810px;width:300px;text-align:right;top:577.0px;font-size:11.2px;line-height:16px;color:#202124;-webkit-text-stroke:0.15px #202124">10.68</div>
<div class="a" style="left:916px;width:300px;text-align:right;top:577.0px;font-size:11.2px;line-height:16px;color:#202124;-webkit-text-stroke:0.15px #202124">52.05%</div>
<div class="a" style="left:1043px;width:300px;text-align:right;top:577.0px;font-size:11.2px;line-height:16px;color:#202124;-webkit-text-stroke:0.15px #202124">956</div>
<div class="a" style="left:316px;width:20px;text-align:center;top:606.6px;font-size:11.2px;line-height:16px;color:#202124">3</div>
<div class="a" style="left:349px;top:606.5px;font-size:11.8px;line-height:16px;color:#202124;-webkit-text-stroke:0.2px #202124">referral</div>
<div class="a" style="left:282px;width:300px;text-align:right;top:606.7px;font-size:11.2px;line-height:16px;color:#202124;-webkit-text-stroke:0.15px #202124">12</div>
<div class="a" style="left:388px;width:300px;text-align:right;top:606.7px;font-size:11.2px;line-height:16px;color:#202124;-webkit-text-stroke:0.15px #202124">94</div>
<div class="a" style="left:493.5px;width:300px;text-align:right;top:606.7px;font-size:11.2px;line-height:16px;color:#202124;-webkit-text-stroke:0.15px #202124">69</div>
<div class="a" style="left:599px;width:300px;text-align:right;top:606.7px;font-size:11.2px;line-height:16px;color:#202124;-webkit-text-stroke:0.15px #202124">1 分 53 秒</div>
<div class="a" style="left:705px;width:300px;text-align:right;top:606.7px;font-size:11.2px;line-height:16px;color:#202124;-webkit-text-stroke:0.15px #202124">5.75</div>
<div class="a" style="left:810px;width:300px;text-align:right;top:606.7px;font-size:11.2px;line-height:16px;color:#202124;-webkit-text-stroke:0.15px #202124">13.94</div>
<div class="a" style="left:916px;width:300px;text-align:right;top:606.7px;font-size:11.2px;line-height:16px;color:#202124;-webkit-text-stroke:0.15px #202124">73.4%</div>
<div class="a" style="left:1043px;width:300px;text-align:right;top:606.7px;font-size:11.2px;line-height:16px;color:#202124;-webkit-text-stroke:0.15px #202124">610</div>
<div class="a" style="left:316px;width:20px;text-align:center;top:636.2px;font-size:11.2px;line-height:16px;color:#202124">4</div>
<div class="a" style="left:349px;top:636.1px;font-size:11.8px;line-height:16px;color:#202124;-webkit-text-stroke:0.2px #202124">(not set)</div>
<div class="a" style="left:282px;width:300px;text-align:right;top:636.3px;font-size:11.2px;line-height:16px;color:#202124;-webkit-text-stroke:0.15px #202124">7</div>
<div class="a" style="left:388px;width:300px;text-align:right;top:636.3px;font-size:11.2px;line-height:16px;color:#202124;-webkit-text-stroke:0.15px #202124">8</div>
<div class="a" style="left:493.5px;width:300px;text-align:right;top:636.3px;font-size:11.2px;line-height:16px;color:#202124;-webkit-text-stroke:0.15px #202124">0</div>
<div class="a" style="left:599px;width:300px;text-align:right;top:636.3px;font-size:11.2px;line-height:16px;color:#202124;-webkit-text-stroke:0.15px #202124">0 分 38 秒</div>
<div class="a" style="left:705px;width:300px;text-align:right;top:636.3px;font-size:11.2px;line-height:16px;color:#202124;-webkit-text-stroke:0.15px #202124">0.00</div>
<div class="a" style="left:810px;width:300px;text-align:right;top:636.3px;font-size:11.2px;line-height:16px;color:#202124;-webkit-text-stroke:0.15px #202124">11.88</div>
<div class="a" style="left:916px;width:300px;text-align:right;top:636.3px;font-size:11.2px;line-height:16px;color:#202124;-webkit-text-stroke:0.15px #202124">0%</div>
<div class="a" style="left:1043px;width:300px;text-align:right;top:636.3px;font-size:11.2px;line-height:16px;color:#202124;-webkit-text-stroke:0.15px #202124">40</div>
</body></html>
